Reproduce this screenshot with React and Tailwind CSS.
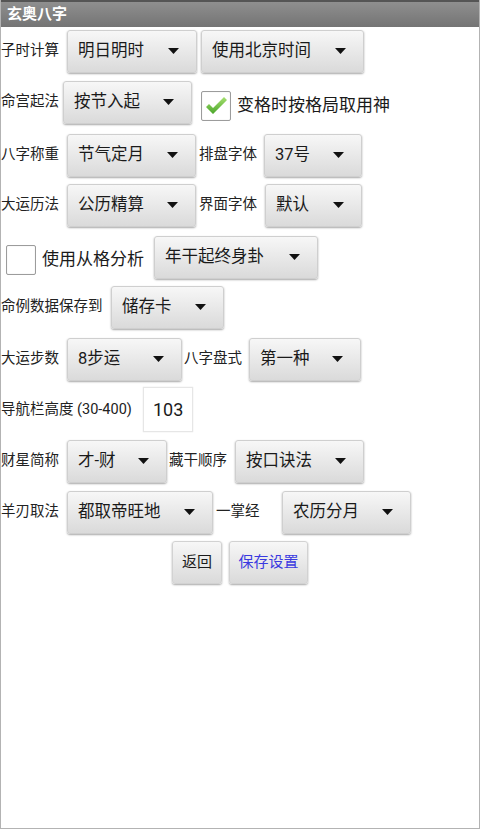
const font = { fontFamily: '"Roboto", "Noto Sans CJK SC", sans-serif' };

const Arrow = () => (
  <svg width="11" height="6" viewBox="0 0 11 6" className="shrink-0">
    <polygon points="0,0 11,0 5.5,6" fill="#111" />
  </svg>
);

const Spinner = ({ text, w }) => (
  <div
    className={`${w} h-[43px] shrink-0 flex items-center justify-between pl-[10px] pr-[17px] rounded-[3px] border border-[#cfcfcf] bg-gradient-to-b from-[#f7f7f7] to-[#dadada] shadow-[0_1px_2px_rgba(0,0,0,0.35)] text-[16.5px] text-[#1a1a1a] whitespace-nowrap`}
  >
    <span>{text}</span>
    <Arrow />
  </div>
);

const Label = ({ text, w, extra = "" }) => (
  <div className={`${w} ${extra} shrink-0 text-[14.5px] text-[#222] whitespace-nowrap`}>{text}</div>
);

const CheckBox = ({ checked }) => (
  <div className="w-[30px] h-[30px] shrink-0 border border-[#9c9c9c] bg-white rounded-[2px] shadow-[inset_0_0_1px_rgba(0,0,0,0.2)] flex items-center justify-center">
    {checked && (
      <svg width="24" height="22" viewBox="0 0 24 22">
        <defs>
          <linearGradient id="chk" x1="0" y1="0" x2="0" y2="1">
            <stop offset="0" stopColor="#a6e070" />
            <stop offset="1" stopColor="#4aa52a" />
          </linearGradient>
        </defs>
        <path d="M2 12 L5 9 L9 13 L20 2 L23 5 L9 19 Z" fill="url(#chk)" />
      </svg>
    )}
  </div>
);

const Button = ({ text, w, blue }) => (
  <div
    className={`${w} h-[43px] flex items-center justify-center rounded-[3px] border border-[#d2d2d2] bg-gradient-to-b from-[#f7f7f7] to-[#dadada] shadow-[0_1px_2px_rgba(0,0,0,0.35)] text-[15px] ${
      blue ? "text-[#3a3ae0]" : "text-[#1a1a1a]"
    }`}
  >
    {text}
  </div>
);

export default function App() {
  return (
    <div style={font} className="w-[480px] h-[829px] bg-white border-x border-b border-[#b3b3b3] flex flex-col overflow-hidden">
      {/* title bar */}
      <div className="h-[27px] shrink-0 border-t-2 border-[#555] bg-gradient-to-b from-[#8f8f8f] to-[#747474] flex items-center pl-[6px] text-white font-bold text-[15px]">
        玄奥八字
      </div>

      <div className="flex items-center h-[44px] mt-[2px]">
        <Label text="子时计算" w="w-[66px]" />
        <Spinner text="明日明时" w="w-[130px]" />
        <div className="ml-[4px]">
          <Spinner text="使用北京时间" w="w-[163px]" />
        </div>
      </div>

      <div className="flex items-center h-[44px] mt-[7px]">
        <Label text="命宫起法" w="w-[62px]" />
        <Spinner text="按节入起" w="w-[129px]" />
        <div className="flex items-center ml-[9px] mt-[8px]">
          <CheckBox checked />
          <span className="ml-[6px] text-[17px] text-[#1a1a1a]">变格时按格局取用神</span>
        </div>
      </div>

      <div className="flex items-center h-[44px] mt-[9px]">
        <Label text="八字称重" w="w-[66px]" />
        <Spinner text="节气定月" w="w-[129px]" />
        <Label text="排盘字体" w="w-[65px]" extra="ml-[3px]" />
        <Spinner text="37号" w="w-[98px]" />
      </div>

      <div className="flex items-center h-[44px] mt-[6px]">
        <Label text="大运历法" w="w-[66px]" />
        <Spinner text="公历精算" w="w-[129px]" />
        <Label text="界面字体" w="w-[66px]" extra="ml-[3px]" />
        <Spinner text="默认" w="w-[97px]" />
      </div>

      <div className="flex items-center h-[44px] mt-[8px]">
        <div className="ml-[5px] mt-[5px] flex items-center">
          <CheckBox />
          <span className="ml-[6px] w-[112px] text-[17px] text-[#1a1a1a]">使用从格分析</span>
        </div>
        <Spinner text="年干起终身卦" w="w-[164px]" />
      </div>

      <div className="flex items-center h-[44px] mt-[6px]">
        <Label text="命例数据保存到" w="w-[110px]" />
        <Spinner text="储存卡" w="w-[113px]" />
      </div>

      <div className="flex items-center h-[44px] mt-[8px]">
        <Label text="大运步数" w="w-[66px]" />
        <Spinner text="8步运" w="w-[115px]" />
        <Label text="八字盘式" w="w-[65px]" extra="ml-[2px]" />
        <Spinner text="第一种" w="w-[112px]" />
      </div>

      <div className="flex items-center h-[45px] mt-[6px]">
        <Label text="导航栏高度 (30-400)" w="w-[142px]" />
        <div className="w-[50px] h-[45px] border border-[#e6e6e6] bg-white shadow-[0_0_1px_rgba(0,0,0,0.15)] flex items-center pl-[9px] text-[18px] text-[#1a1a1a]">
          103
        </div>
      </div>

      <div className="flex items-center h-[44px] mt-[7px]">
        <Label text="财星简称" w="w-[66px]" />
        <Spinner text="才-财" w="w-[100px]" />
        <Label text="藏干顺序" w="w-[66px]" extra="ml-[2px]" />
        <Spinner text="按口诀法" w="w-[129px]" />
      </div>

      <div className="flex items-center h-[44px] mt-[7px]">
        <Label text="羊刃取法" w="w-[66px]" />
        <Spinner text="都取帝旺地" w="w-[146px]" />
        <Label text="一掌经" w="w-[66px]" extra="ml-[3px]" />
        <Spinner text="农历分月" w="w-[129px]" />
      </div>

      <div className="flex items-center justify-center gap-[7px] h-[43px] mt-[7px]">
        <Button text="返回" w="w-[50px]" />
        <Button text="保存设置" w="w-[79px]" blue />
      </div>
    </div>
  );
}
